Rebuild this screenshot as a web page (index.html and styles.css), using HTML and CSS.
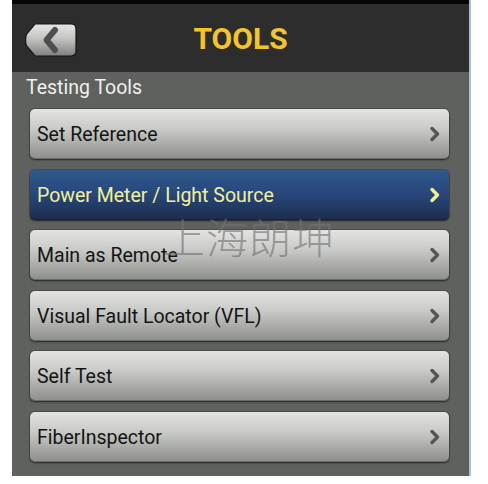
FILE: index.html
```html
<!DOCTYPE html>
<html>
<head>
<meta charset="utf-8">
<link rel="stylesheet" href="styles.css">
</head>
<body>
<div class="screen">
  <header class="header">
    <div class="back">
      <svg width="52" height="34" viewBox="0 0 52 34">
        <defs>
          <linearGradient id="bg" x1="0" y1="0" x2="0" y2="1">
            <stop offset="0" stop-color="#e6e6e4"/>
            <stop offset="0.45" stop-color="#c4c4c2"/>
            <stop offset="1" stop-color="#7e7e7c"/>
          </linearGradient>
        </defs>
        <path d="M10 1 H46 Q51 1 51 6 V28 Q51 33 46 33 H10 L2 23.5 Q0.6 21.5 0.6 17 Q0.6 12.5 2 10.5 Z" fill="url(#bg)" stroke="#141414" stroke-width="1.2"/>
        <path d="M30 7 L21.5 17 L30 27" fill="none" stroke="#4e4e4e" stroke-width="6" stroke-linecap="round" stroke-linejoin="round"/>
      </svg>
    </div>
    <h1 class="title">TOOLS</h1>
  </header>
  <div class="content">
    <div class="section">Testing Tools</div>
    <div class="list">
      <div class="item"><span>Set Reference</span><svg class="chev" width="12" height="16" viewBox="0 0 12 16"><path d="M3 2.5 L8.5 8 L3 13.5" fill="none" stroke-width="3.4" stroke-linecap="round" stroke-linejoin="round"/></svg></div>
      <div class="item active"><span>Power Meter / Light Source</span><svg class="chev" width="12" height="16" viewBox="0 0 12 16"><path d="M3 2.5 L8.5 8 L3 13.5" fill="none" stroke-width="3.4" stroke-linecap="round" stroke-linejoin="round"/></svg></div>
      <div class="item"><span>Main as Remote</span><svg class="chev" width="12" height="16" viewBox="0 0 12 16"><path d="M3 2.5 L8.5 8 L3 13.5" fill="none" stroke-width="3.4" stroke-linecap="round" stroke-linejoin="round"/></svg></div>
      <div class="item"><span>Visual Fault Locator (VFL)</span><svg class="chev" width="12" height="16" viewBox="0 0 12 16"><path d="M3 2.5 L8.5 8 L3 13.5" fill="none" stroke-width="3.4" stroke-linecap="round" stroke-linejoin="round"/></svg></div>
      <div class="item"><span>Self Test</span><svg class="chev" width="12" height="16" viewBox="0 0 12 16"><path d="M3 2.5 L8.5 8 L3 13.5" fill="none" stroke-width="3.4" stroke-linecap="round" stroke-linejoin="round"/></svg></div>
      <div class="item"><span>FiberInspector</span><svg class="chev" width="12" height="16" viewBox="0 0 12 16"><path d="M3 2.5 L8.5 8 L3 13.5" fill="none" stroke-width="3.4" stroke-linecap="round" stroke-linejoin="round"/></svg></div>
    </div>
    <div class="section next">Utility Tools</div>
  </div>
  <div class="watermark">上海朗坤</div>
</div>
</body>
</html>
```
FILE: styles.css
```css
html, body {
  margin: 0;
  padding: 0;
  background: #ffffff;
}
body {
  width: 488px;
  height: 484px;
  overflow: hidden;
  font-family: Roboto, "Liberation Sans", sans-serif;
}
.screen {
  position: relative;
  margin-left: 12px;
  width: 457px;
  height: 476px;
  overflow: hidden;
  background: #5e615d;
  border-right: 2px solid #a9bfd8;
}
.header {
  height: 68px;
  border-top: 4px solid #050505;
  background: #2d2d2d;
  display: flex;
  align-items: center;
  position: relative;
}
.back {
  margin-left: 13px;
  margin-top: 4px;
  width: 52px;
  height: 34px;
  display: flex;
}
.title {
  position: absolute;
  left: 0;
  right: 0;
  top: 0;
  bottom: 0;
  margin: 0;
  display: flex;
  align-items: center;
  justify-content: center;
  font-size: 30px;
  font-weight: 700;
  color: #f3c52a;
  pointer-events: none;
}
.content {
  display: flex;
  flex-direction: column;
}
.section {
  padding-left: 14px;
  height: 33px;
  line-height: 32px;
  font-size: 19.5px;
  color: #f0f0ee;
}
.list {
  display: flex;
  flex-direction: column;
  gap: 10.6px;
  padding: 4px 20px 0 18px;
}
.item {
  height: 50px;
  box-sizing: border-box;
  border-radius: 5px;
  background: linear-gradient(#e3e4e1 0%, #c9cac7 40%, #8c8e8a 100%);
  box-shadow: 0 0 0 1px rgba(40,40,40,0.35), 0 1px 2px rgba(0,0,0,0.55), inset 0 -1px 0 rgba(0,0,0,0.25);
  display: flex;
  align-items: center;
  justify-content: space-between;
  padding: 0 8px 0 7px;
  font-size: 19.5px;
  color: #141414;
}
.item span {
  margin-top: 1px;
}
.chev path {
  stroke: #555654;
}
.item.active {
  background: linear-gradient(#30598c 0%, #27467a 50%, #1c2d4c 100%);
  color: #f1f19a;
}
.item.active .chev path {
  stroke: #f4f48a;
}
.section.next {
  margin-top: 10px;
}
.watermark {
  position: absolute;
  left: 151px;
  top: 210px;
  font-family: "Noto Sans CJK SC", sans-serif;
  font-weight: 300;
  font-size: 42px;
  letter-spacing: 1px;
  color: rgba(115, 115, 115, 0.65);
  line-height: 52px;
  pointer-events: none;
}
```
